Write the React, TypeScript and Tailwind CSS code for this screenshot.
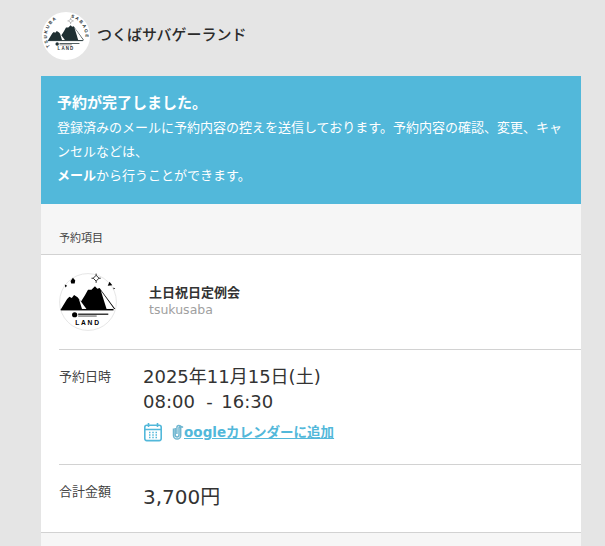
const FONT = "font-['DejaVu_Sans','Noto_Sans_CJK_JP',sans-serif]";

function Mountains({ dark }: { dark: string }) {
  return (
    <>
      <path d="M 3 63 L 14 45 L 18 41 L 22 43 L 26 38 L 32 42 L 38 49 L 45 38 L 50 29 L 56 29 L 62 23 L 66 27 L 70 26 L 97 62 Z" fill={dark} />
      <path d="M 34 44 L 48 63 L 40 63 Z" fill="#fff" />
      <path d="M 72 30 L 95 62 L 82 62 Z" fill="#fff" />
      <rect x="3" y="62" width="91" height="2.5" fill={dark} />
      <circle cx="27" cy="72" r="4.5" fill={dark} />
      <rect x="33" y="70" width="52" height="2" fill={dark} />
      <rect x="33" y="73" width="32" height="2.5" fill="#8a8a8a" />
      <text x="50" y="89" textAnchor="middle" fill={dark} fontFamily="'Liberation Sans',sans-serif" fontWeight="700" fontSize="11.5" letterSpacing="3">
        LAND
      </text>
    </>
  );
}

function Sight({ color }: { color: string }) {
  return (
    <g fill="none" stroke={color} strokeWidth="1.4">
      <path d="M 62 7 L 67 12 L 62 17 L 57 12 Z" />
      <path d="M 62 4 v 3 M 62 17 v 3 M 54 12 h 3 M 67 12 h 3" />
    </g>
  );
}

function HeaderLogo() {
  const dark = "#1f3033";
  return (
    <svg width={48} height={48} viewBox="0 0 100 100" className="shrink-0">
      <defs>
        <path id="arc-left" d="M 17 72 A 40 40 0 0 1 44 10.5" />
        <path id="arc-right" d="M 60 11.3 A 40 40 0 0 1 87 66" />
      </defs>
      <circle cx="50" cy="50" r="50" fill="#fff" />
      <g fill={dark} fontFamily="'Liberation Sans',sans-serif" fontWeight="700" fontSize="9.5" letterSpacing="3">
        <text>
          <textPath href="#arc-left">TSUKUBA</textPath>
        </text>
        <text>
          <textPath href="#arc-right">SABAGE</textPath>
        </text>
      </g>
      <g transform="translate(10 9) scale(.8)">
        <Sight color="#777" />
        <Mountains dark={dark} />
      </g>
    </svg>
  );
}

function ItemLogo() {
  return (
    <svg width={58} height={58} viewBox="0 0 100 100" className="shrink-0">
      <circle cx="50" cy="50" r="49" fill="#fff" stroke="#e2e2e2" strokeWidth="1.5" />
      <g fill="#000">
        <path d="M 24 8 l 4 5 l -1 5 l -6 0 l -1 -4 z" />
        <path d="M 10 20 l 4 2 l -3 3 z" />
        <path d="M 87 15 l 5 6 l -8 1 z" />
        <path d="M 94 25 l 3 2 l -3 1 z" />
      </g>
      <g transform="translate(2 -3)">
        <Sight color="#000" />
      </g>
      <Mountains dark="#000" />
    </svg>
  );
}

function CalendarIcon() {
  return (
    <svg width="20" height="20" viewBox="0 0 20 20" fill="none" stroke="#52b8da" strokeWidth="1.6" className="shrink-0">
      <rect x="1.8" y="3.2" width="16.4" height="15.4" rx="2" />
      <path d="M 2 7.5 H 18 M 5.5 1 V 5 M 14.5 1 V 5" />
      <path d="M 6 10.5 h 1.5 M 9.25 10.5 h 1.5 M 12.5 10.5 h 1.5 M 6 13 h 1.5 M 9.25 13 h 1.5 M 12.5 13 h 1.5 M 6 15.5 h 1.5 M 9.25 15.5 h 1.5 M 12.5 15.5 h 1.5" strokeWidth="1.3" />
    </svg>
  );
}

export default function App() {
  return (
    <div className={`h-[546px] overflow-hidden bg-[#e5e5e5] pl-[41px] text-[#333] ${FONT}`}>
      <div className="w-[540px]">
        <header className="flex h-[76px] items-center gap-[7px] pb-[4px] pl-px">
          <HeaderLogo />
          <span className="-mt-[1px] text-[15px] font-medium text-[#2b2b2b]">つくばサバゲーランド</span>
        </header>

        <section className="h-[128px] bg-[#52b8da] px-4 pt-[15px] text-[13px] leading-[24px] text-white">
          <h1 className="text-[15px] font-bold leading-[24px]">予約が完了しました。</h1>
          <p className="mt-[1px]">
            登録済みのメールに予約内容の控えを送信しております。予約内容の確認、変更、キャンセルなどは、
            <br />
            <b>メール</b>から行うことができます。
          </p>
        </section>

        <div className="flex h-[51px] items-end border-b border-[#d2d2d2] bg-[#f6f6f6] px-[18px] pb-[7px] text-[11px] leading-[16px] text-[#444]">
          予約項目
        </div>

        <div className="bg-white pl-[18px]">
          <div className="flex h-[95px] items-center gap-[32px] border-b border-[#d2d2d2]">
            <ItemLogo />
            <div className="-mt-[2px]">
              <div className="text-[13px] font-bold leading-[18px] text-[#333]">土日祝日定例会</div>
              <div className="text-[12.5px] leading-[16px] text-[#a0a0a0]">tsukusaba</div>
            </div>
          </div>

          <div className="flex h-[115px] border-b border-[#d2d2d2] pt-[14px]">
            <div className="w-[84px] pt-[4px] text-[13px] leading-[18px] text-[#444]">予約日時</div>
            <div>
              <div className="text-[18px] leading-[25px]">2025年11月15日(土)</div>
              <div className="text-[18px] leading-[25px]">08:00 &nbsp;- &nbsp;<span className="-ml-[3px]">16:30</span></div>
              <div className="mt-[8px] flex items-center gap-[10px]">
                <CalendarIcon />
                <a className="relative text-[13.5px] font-bold leading-[20px] text-[#52b8da] underline" href="#">
                  Googleカレンダーに追加
                  <svg width="12" height="16" viewBox="0 0 12 16" fill="none" stroke="#6fb6d0" strokeWidth="1.5" className="absolute left-[-1px] top-[2px] bg-white">
                    <path d="M 3.2 4 V 11 a 1.9 1.9 0 0 0 3.8 0 V 3.5 a 3 3 0 0 1 4 0 M 1.5 4.5 V 11.5 a 3.6 3.6 0 0 0 7.2 0 V 3.5 a 1.9 1.9 0 0 0 -3.8 0 V 10" />
                  </svg>
                </a>
              </div>
            </div>
          </div>

          <div className="flex h-[67px] pt-[17px]">
            <div className="w-[84px] pt-[1px] text-[13px] leading-[18px] text-[#444]">合計金額</div>
            <div className="text-[20px] leading-[30px]">3,700円</div>
          </div>
        </div>

        <div className="h-[20px] border-t border-[#d2d2d2] bg-[#f6f6f6]" />
      </div>
    </div>
  );
}
